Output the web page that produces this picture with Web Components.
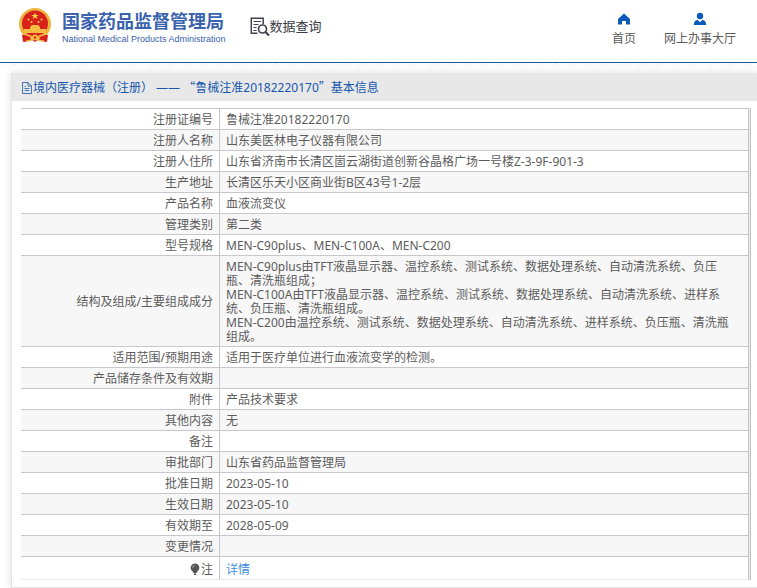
<!DOCTYPE html>
<html lang="zh-CN">
<head>
<meta charset="utf-8">
<title>国家药品监督管理局 数据查询</title>
<style>
html { background: #fff; }
body { margin: 0; font: 12px/14px "Noto Sans", "Noto Sans CJK SC", sans-serif; color: #5c5c5c; }
.quote { font-family: "Noto Sans CJK SC", sans-serif; }
</style>
</head>
<body>
<site-header>
  <site-brand></site-brand>
  <search-title>数据查询</search-title>
  <nav-item slot="nav" icon="home">首页</nav-item>
  <nav-item slot="nav" icon="user">网上办事大厅</nav-item>
</site-header>
<info-panel>
  <span slot="heading">境内医疗器械（注册） ——&nbsp;<span class="quote">“</span>鲁械注准20182220170<span class="quote">”</span>基本信息</span>
  <record-table></record-table>
</info-panel>
<script>
class Base extends HTMLElement {
  constructor() {
    super();
    this.attachShadow({ mode: "open" });
  }
  connectedCallback() { this.shadowRoot.innerHTML = this.render(); }
}

customElements.define("site-header", class extends Base {
  render() {
    return `<style>
      :host { display: block; background: #fff; border-bottom: 1px solid #1b5998; }
      header { display: flex; align-items: flex-start; height: 62px; box-sizing: border-box; padding: 8px 21px 0 18px; }
      nav { display: flex; gap: 28px; margin-left: auto; padding-top: 4px; }
    </style>
    <header><slot></slot><nav><slot name="nav"></slot></nav></header>`;
  }
});

customElements.define("site-brand", class extends Base {
  render() {
    return `<style>
      :host { display: flex; gap: 10px; color: #3a62ae; white-space: nowrap; }
      svg { width: 34px; height: 36px; flex: none; }
      .name { display: block; margin-top: 3px; font-size: 18px; line-height: 20px; font-weight: 700; }
      .en { display: block; font: 9px/16px "Liberation Sans", sans-serif; }
    </style>
    <svg viewBox="0 0 34 36" aria-hidden="true">
      <path fill="#d9211c" d="M5 24h24l-1 10-8-2-3 2-3-2-8 2z"/>
      <circle cx="17" cy="16" r="16" fill="#edb63d"/>
      <circle cx="17" cy="15.500" r="13" fill="#d9211c"/>
      <path fill="#f6d04d" d="M17 4.500l1 2.400h2.600l-2.100 1.600.8 2.500-2.300-1.500-2.300 1.500.8-2.500-2.100-1.600H16z"/>
      <g fill="#f6d04d"><circle cx="10.500" cy="11.500" r="1"/><circle cx="13.500" cy="14" r="1"/><circle cx="20.500" cy="14" r="1"/><circle cx="23.500" cy="11.500" r="1"/></g>
      <path fill="#f2bd42" d="M12 19l2-2h6l2 2v2h6v4H6v-4h6z"/>
      <path fill="#d9211c" d="M4 27c4-1 7 1 9 3-3 2-6 3-8 4zM30 27c-4-1-7 1-9 3 3 2 6 3 8 4z"/>
      <path fill="none" stroke="#edb63d" stroke-width="1.500" d="M5 26q7 1 12 5 5-4 12-5M8 33q5 0 9-3 4 3 9 3"/>
      <circle cx="17" cy="29.500" r="3" fill="#f2bd42"/><circle cx="17" cy="29.500" r="1.200" fill="#d9211c"/>
    </svg>
    <div><span class="name">国家药品监督管理局</span><span class="en">National Medical Products Administration</span></div>`;
  }
});

customElements.define("search-title", class extends Base {
  render() {
    return `<style>
      :host { display: flex; align-items: center; margin: 8px 0 0 24px; font-size: 13px; line-height: 20px; color: #3b3b45; white-space: nowrap; }
      svg { width: 20px; height: 20px; }
    </style>
    <svg viewBox="0 0 20 20" fill="none" stroke="#41414d" aria-hidden="true">
      <path stroke-width="1.500" d="M7.500 17.200H1.300V2.300h11.900V8"/>
      <path d="M3.500 5.500h7.500M3.500 8.500h5M3.500 11.500h3M3.500 14.500h3"/>
      <circle cx="12.500" cy="13" r="4" stroke-width="1.700"/>
      <path stroke-width="2.200" d="M15.500 16l3.500 3.500"/>
    </svg><slot></slot>`;
  }
});

customElements.define("nav-item", class extends Base {
  render() {
    const paths = {
      home: '<path d="M7 1.500L1 7v5.500h4V9h4v3.500h4V7z"/>',
      user: '<circle cx="7" cy="4" r="3.200"/><path d="M.8 13c0-3 1.200-4.700 3.700-5.300L7 10.200l2.500-2.500c2.500.6 3.700 2.300 3.700 5.300z"/>'
    };
    return `<style>
      :host { display: block; }
      a { display: flex; flex-direction: column; align-items: center; gap: 6px; color: #5c5c5c; text-decoration: none; white-space: nowrap; }
      svg { width: 14px; height: 14px; fill: #0d5bb8; }
    </style>
    <a href="#"><svg viewBox="0 0 14 14" aria-hidden="true">${paths[this.getAttribute("icon")]}</svg><slot></slot></a>`;
  }
});

customElements.define("info-panel", class extends Base {
  render() {
    return `<style>
      :host { display: block; padding: 10px 0 0 11px; background: linear-gradient(#fff6, #fff 6px), repeating-linear-gradient(135deg, #d3e9f5 0 1px, #fff 1px 3px); }
      section { background: #fff; border: 1px solid #e4e4e4; border-width: 0 0 1px 1px; box-shadow: 0 0 8px #ddd; }
      h1 { display: flex; align-items: center; gap: 1px; margin: 0; height: 28px; padding: 1px 10px 0; box-sizing: border-box; background: #e8e8e8; color: #1657ae; font-size: 12px; font-weight: 400; white-space: nowrap; }
      svg { width: 10px; height: 12px; flex: none; }
      .content { padding: 7px 6px 7px 9px; }
    </style>
    <section>
      <h1><svg viewBox="0 0 10 12" fill="none" stroke="#1657ae" stroke-width=".8" aria-hidden="true"><path d="M.5.500h5.500l3.500 3.500v7.500H.5zM6 .5V4h3.500M2.500 4.500H4M2.500 6.500h5M2.500 8.500h5"/></svg><slot name="heading"></slot></h1>
      <div class="content"><slot></slot></div>
    </section>`;
  }
});

const records = [
  ["注册证编号", "鲁械注准20182220170"],
  ["注册人名称", "山东美医林电子仪器有限公司"],
  ["注册人住所", "山东省济南市长清区崮云湖街道创新谷晶格广场一号楼Z-3-9F-901-3"],
  ["生产地址", "长清区乐天小区商业街B区43号1-2层"],
  ["产品名称", "血液流变仪"],
  ["管理类别", "第二类"],
  ["型号规格", "MEN-C90plus、MEN-C100A、MEN-C200"],
  ["结构及组成/主要组成成分", "MEN-C90plus由TFT液晶显示器、温控系统、测试系统、数据处理系统、自动清洗系统、负压瓶、清洗瓶组成；<br>MEN-C100A由TFT液晶显示器、温控系统、测试系统、数据处理系统、自动清洗系统、进样系统、负压瓶、清洗瓶组成。<br>MEN-C200由温控系统、测试系统、数据处理系统、自动清洗系统、进样系统、负压瓶、清洗瓶组成。"],
  ["适用范围/预期用途", "适用于医疗单位进行血液流变学的检测。"],
  ["产品储存条件及有效期", ""],
  ["附件", "产品技术要求"],
  ["其他内容", "无"],
  ["备注", ""],
  ["审批部门", "山东省药品监督管理局"],
  ["批准日期", "2023-05-10"],
  ["生效日期", "2023-05-10"],
  ["有效期至", "2028-05-09"],
  ["变更情况", ""],
  ['<svg viewBox="0 0 10 12" aria-hidden="true"><path fill="#555" d="M5 .5a4.300 4.300 0 0 0-2.500 7.800L3.500 10h3l1-1.700A4.300 4.300 0 0 0 5 .5zM3.800 10.500h2.400V12H3.800z"/><path stroke="#ccc" fill="none" d="M2.800 4.500Q3 3 4.500 2.600"/></svg>注', '<a href="#">详情</a>']
];

customElements.define("record-table", class extends Base {
  render() {
    const rows = records.map(([label, value]) => `<tr><th scope="row">${label}</th><td>${value}</td></tr>`).join("");
    return `<style>
      :host { display: block; border-right: 1px solid #c4c4c8; padding-right: 1px; background: #e8e8e8; }
      table { width: 100%; border-spacing: 0; table-layout: fixed; background: #fff; border-right: 1px solid #c8c8cc; }
      col.label { width: 199px; }
      th, td { height: 14px; padding: 4px 6px 2px; border-top: 1px solid #c8c8cc; font-size: 12px; line-height: 14px; font-weight: 400; vertical-align: middle; }
      th { text-align: right; border-right: 1px solid #c8c8cc; }
      td { text-align: left; padding-right: 10px; }
      tr:nth-child(even) { background: #f7f7f7; }
      tr:last-child > * { padding-top: 6px; border-bottom: 1px solid #e8e8e8; }
      a { color: #3e8ee0; text-decoration: none; }
      svg { width: 10px; height: 12px; vertical-align: -1px; margin-right: 1px; }
    </style>
    <table><colgroup><col class="label"><col></colgroup><tbody>${rows}</tbody></table>`;
  }
});
</script>
</body>
</html>
